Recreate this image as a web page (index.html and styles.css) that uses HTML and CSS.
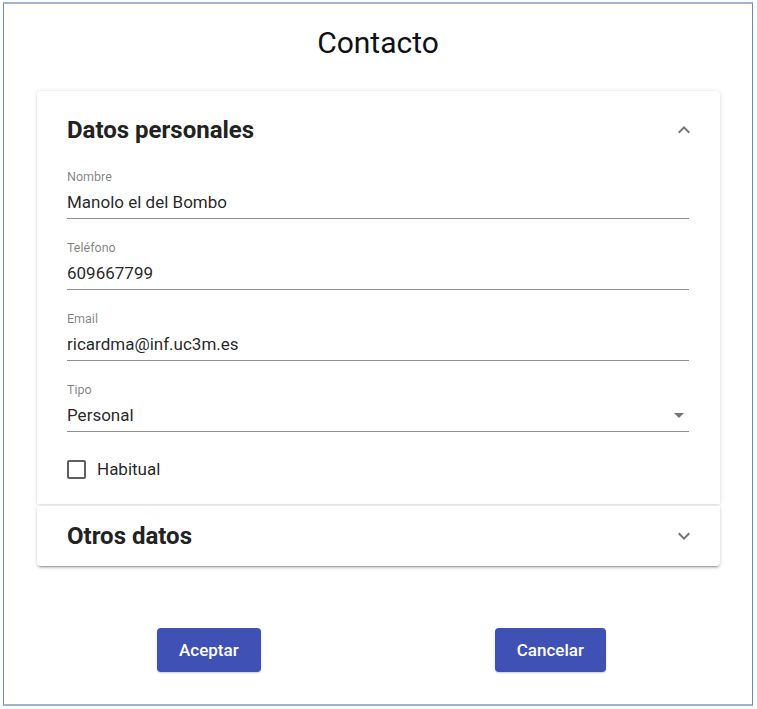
FILE: index.html
```html
<!DOCTYPE html>
<html lang="es">
<head>
<meta charset="utf-8">
<title>Contacto</title>
<link rel="stylesheet" href="styles.css">
</head>
<body>
<div class="frame">
  <h1 class="title">Contacto</h1>
  <div class="accordion">
    <section class="panel panel-open">
      <div class="panel-header">
        <span class="panel-title">Datos personales</span>
        <svg class="chevron" width="24" height="24" viewBox="0 0 24 24"><path d="M7.41 15.41 12 10.83l4.59 4.58L18 14l-6-6-6 6z" fill="#757575"/></svg>
      </div>
      <div class="panel-body">
        <div class="field">
          <div class="field-label">Nombre</div>
          <div class="field-value">Manolo el del Bombo</div>
        </div>
        <div class="field">
          <div class="field-label">Teléfono</div>
          <div class="field-value">609667799</div>
        </div>
        <div class="field">
          <div class="field-label">Email</div>
          <div class="field-value">ricardma@inf.uc3m.es</div>
        </div>
        <div class="field">
          <div class="field-label">Tipo</div>
          <div class="field-value select-value">
            <span>Personal</span>
            <span class="select-arrow"></span>
          </div>
        </div>
        <label class="checkbox">
          <span class="checkbox-box"></span>
          <span class="checkbox-label">Habitual</span>
        </label>
      </div>
    </section>
    <section class="panel panel-closed">
      <div class="panel-header panel-header-closed">
        <span class="panel-title">Otros datos</span>
        <svg class="chevron" width="24" height="24" viewBox="0 0 24 24"><path d="M7.41 8.59 12 13.17l4.59-4.58L18 10l-6 6-6-6z" fill="#757575"/></svg>
      </div>
    </section>
  </div>
  <div class="actions">
    <button class="btn">Aceptar</button>
    <button class="btn">Cancelar</button>
  </div>
</div>
</body>
</html>
```
FILE: styles.css
```css
html, body {
  margin: 0;
  padding: 0;
  background: #ffffff;
}
body {
  font-family: Roboto, "Liberation Sans", Arial, sans-serif;
  color: rgba(0, 0, 0, 0.87);
}
.frame {
  box-sizing: border-box;
  margin: 2px 0 0 3px;
  width: 750px;
  height: 704px;
  border-top: 2px solid #9db4d4;
  border-bottom: 2px solid #9db4d4;
  border-left: 1px solid #6c8fc8;
  border-right: 1px solid #5f88cc;
  display: flex;
  flex-direction: column;
}
.title {
  margin: 21px 0 0 0;
  font-size: 30px;
  font-weight: 400;
  line-height: 36px;
  text-align: center;
  color: #111;
}
.accordion {
  margin: 30px 32px 0 33px;
  display: flex;
  flex-direction: column;
  gap: 2px;
}
.panel {
  background: #fff;
  box-shadow: 0 3px 1px -2px rgba(0,0,0,.2), 0 2px 2px 0 rgba(0,0,0,.14), 0 1px 5px 0 rgba(0,0,0,.12);
}
.panel-open {
  border-radius: 4px 4px 0 0;
  box-shadow: 0 1px 5px 0 rgba(0,0,0,.12), 0 0 2px 0 rgba(0,0,0,.08);
}
.panel-closed {
  border-radius: 0 0 4px 4px;
}
.panel-header {
  height: 78px;
  padding: 0 24px 0 30px;
  display: flex;
  align-items: center;
  justify-content: space-between;
}
.panel-header-closed {
  height: 60px;
}
.panel-title {
  font-size: 24px;
  font-weight: 700;
  color: #222;
}
.chevron {
  display: block;
}
.panel-body {
  padding: 0 31px 23px 30px;
}
.field {
  margin-bottom: 21px;
  border-bottom: 1px solid #8f8f8f;
  padding-bottom: 4px;
}
.field-label {
  font-size: 12.5px;
  line-height: 16px;
  color: rgba(0, 0, 0, 0.5);
  margin-bottom: 5px;
}
.field-value {
  font-size: 17px;
  line-height: 24px;
  color: rgba(0, 0, 0, 0.87);
}
.select-value {
  display: flex;
  align-items: center;
  justify-content: space-between;
}
.select-arrow {
  width: 0;
  height: 0;
  border-left: 5px solid transparent;
  border-right: 5px solid transparent;
  border-top: 5px solid #757575;
  margin-right: 5px;
}
.checkbox {
  display: flex;
  align-items: center;
  gap: 11px;
  height: 24px;
  margin-top: 25px;
}
.checkbox-box {
  box-sizing: border-box;
  width: 19px;
  height: 19px;
  border: 2px solid #5f5f5f;
  border-radius: 2px;
}
.checkbox-label {
  font-size: 17px;
  color: rgba(0, 0, 0, 0.87);
}
.actions {
  margin: 62px 29px 0 36px;
  display: flex;
  justify-content: space-around;
}
.btn {
  height: 44px;
  padding: 0 22px;
  border: none;
  border-radius: 4px;
  background: #3f51b5;
  color: #fff;
  font-family: Roboto, "Liberation Sans", Arial, sans-serif;
  font-size: 17px;
  font-weight: 500;
  box-shadow: 0 1px 2px rgba(0,0,0,.2);
}
```
